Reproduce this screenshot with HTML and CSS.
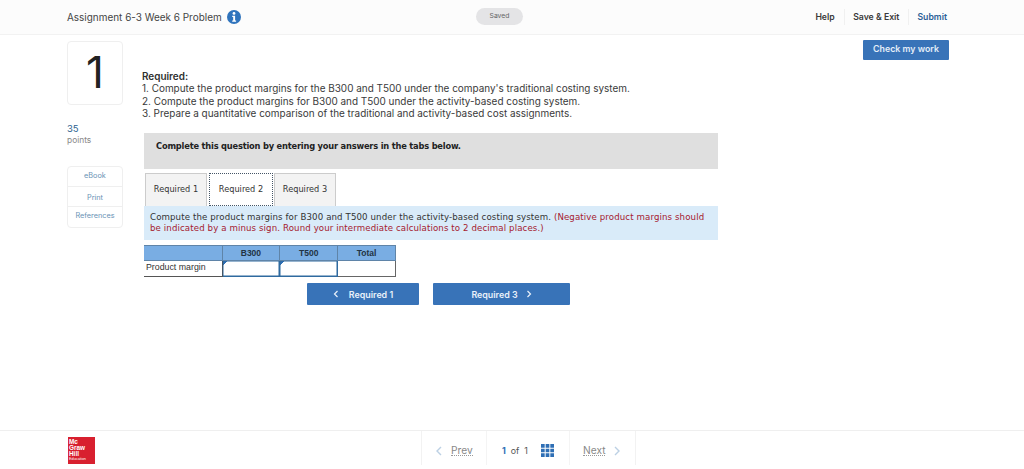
FILE: index.html
```html
<!DOCTYPE html>
<html lang="en">
<head>
<meta charset="utf-8">
<title>Assignment 6-3 Week 6 Problem</title>
<link rel="stylesheet" href="styles.css">
</head>
<body>
<div class="page">
  <header class="topbar">
    <div class="title-wrap">
      <span class="title">Assignment 6-3 Week 6 Problem</span>
      <svg class="info" viewBox="0 0 14 14" width="14" height="14"><circle cx="7" cy="7" r="7" fill="#2f74bd"/><circle cx="7" cy="3.4" r="1.4" fill="#fff"/><path d="M5.2 5.7h2.9v4.7h1v1.4H5.2v-1.4h1V7.1h-1z" fill="#fff"/></svg>
    </div>
    <div class="saved">Saved</div>
    <nav class="top-actions">
      <span class="act">Help</span>
      <span class="act">Save &amp; Exit</span>
      <span class="act submit">Submit</span>
    </nav>
  </header>

  <main class="main">
    <aside class="side">
      <div class="qnum">1</div>
      <div class="pts">35</div>
      <div class="pts-label">points</div>
      <div class="links">
        <div class="link">eBook</div>
        <div class="link print">Print</div>
        <div class="link">References</div>
      </div>
    </aside>

    <section class="content">
      <div class="req">
        <div class="req-head">Required:</div>
        <div>1. Compute the product margins for the B300 and T500 under the company's traditional costing system.</div>
        <div>2. Compute the product margins for B300 and T500 under the activity-based costing system.</div>
        <div>3. Prepare a quantitative comparison of the traditional and activity-based cost assignments.</div>
      </div>
      <div class="complete">Complete this question by entering your answers in the tabs below.</div>
      <div class="tabs">
        <div class="tab">Required 1</div>
        <div class="tab active">Required 2</div>
        <div class="tab">Required 3</div>
      </div>
      <div class="prompt">Compute the product margins for B300 and T500 under the activity-based costing system. <span class="red">(Negative product margins should be indicated by a minus sign. Round your intermediate calculations to 2 decimal places.)</span></div>
      <table class="grid">
        <tr><th class="c0"></th><th>B300</th><th>T500</th><th>Total</th></tr>
        <tr><td class="c0">Product margin</td><td class="input"></td><td class="input"></td><td class="plain"></td></tr>
      </table>
      <div class="nav-btns">
        <div class="btn b1"><svg class="chev" viewBox="0 0 6 8" width="6" height="8"><path d="M4.5 1 1.5 4l3 3" fill="none" stroke="#e9f1fa" stroke-width="1.2"/></svg>Required 1</div>
        <div class="btn b2">Required 3<svg class="chev r" viewBox="0 0 6 8" width="6" height="8"><path d="M1.5 1l3 3-3 3" fill="none" stroke="#e9f1fa" stroke-width="1.2"/></svg></div>
      </div>
    </section>

    <div class="check-col"><div class="check">Check my work</div></div>
  </main>

  <footer class="foot">
    <div class="logo">Mc<br>Graw<br>Hill<span class="edu">Education</span></div>
    <div class="pager">
      <div class="pg prev"><svg class="arrow" viewBox="0 0 7 10" width="7" height="10"><path d="M6 1 2 5l4 4" fill="none" stroke="#bcd0e4" stroke-width="1.4"/></svg><span class="dotted">Prev</span></div>
      <div class="pg mid"><span class="cur">1</span><span class="of">of</span><span>1</span>
        <svg class="gridicon" viewBox="0 0 12 12" width="13" height="13"><path fill="#2f6fb5" d="M0 0h3.4v3.4H0zM4.3 0h3.4v3.4H4.3zM8.6 0H12v3.4H8.6zM0 4.3h3.4v3.4H0zM4.3 4.3h3.4v3.4H4.3zM8.6 4.3H12v3.4H8.6zM0 8.6h3.4V12H0zM4.3 8.6h3.4V12H4.3zM8.6 8.6H12V12H8.6z"/></svg>
      </div>
      <div class="pg next"><span class="dotted">Next</span><svg class="arrow r" viewBox="0 0 7 10" width="7" height="10"><path d="M1 1l4 4-4 4" fill="none" stroke="#bcd0e4" stroke-width="1.4"/></svg></div>
    </div>
  </footer>
</div>
</body>
</html>
```

FILE: styles.css
```css
* { box-sizing: border-box; }
html, body { margin: 0; padding: 0; background: #fff; }
body { font-family: "Inter", "Liberation Sans", sans-serif; color: #333; }
.page { height: 469px; display: flex; flex-direction: column; overflow: hidden; }

.topbar { height: 35px; flex: none; display: grid; grid-template-columns: 409px 47px 1fr; align-items: center; padding: 0 75px 1px 67px; background: #fcfcfc; border-bottom: 1px solid #f2f2f2; }
.title-wrap { display: flex; align-items: center; gap: 5px; }
.title { font-size: 9.95px; color: #444; }
.info { display: block; }
.saved { width: 47px; height: 17px; margin-bottom: 1px; border-radius: 9px; background: #e4e4e6; font-size: 6.8px; line-height: 15px; text-align: center; color: #666; }
.top-actions { display: flex; justify-content: flex-end; align-items: center; font-size: 8.7px; font-weight: 600; color: #3a3a3a; }
.act { padding: 3px 8.5px; border-right: 1px solid #f0f0f0; }
.act:first-child { padding-right: 9px; }
.act:last-child { border-right: 0; padding-right: 2px; }
.submit { color: #2c5f97; }

.main { flex: 1; display: flex; min-height: 0; padding-left: 67px; }
.side { width: 56px; flex: none; padding-top: 6px; }
.qnum { height: 64px; border: 1px solid #efefef; border-radius: 4px; font-size: 44px; font-weight: 400; line-height: 60px; text-align: center; color: #222; }
.pts { margin-top: 17px; font-size: 9.5px; line-height: 13px; color: #2d5f8f; }
.pts-label { font-size: 8.4px; line-height: 11px; color: #888; }
.links { margin-top: 20px; border: 1px solid #efefef; border-radius: 4px; font-size: 7.3px; text-align: center; color: #6a93b5; }
.link { height: 20px; line-height: 18px; border-bottom: 1px solid #efefef; }
.link.print { line-height: 21px; }
.link:last-child { border-bottom: 0; }

.content { width: 576px; margin-left: 19px; flex: none; padding-top: 35px; }
.req { font-size: 9.95px; line-height: 12.3px; color: #3a3a3a; }
.req-head { font-weight: 600; color: #2f2f2f; }
.complete { width: 574px; height: 36px; margin: 14px 0 0 2px; padding: 8px 12px; background: #dfdfdf; font: 700 8.3px/11px "DejaVu Sans", sans-serif; letter-spacing: -.2px; color: #222; }
.tabs { display: flex; margin: 4px 0 0 3px; height: 33px; }
.tab { width: 62px; border: 1px solid #ccc; border-bottom: 0; background: #f3f3f3; font: 8.2px/31px "DejaVu Sans", sans-serif; text-align: center; color: #333; margin-right: 2px; }
.tab:last-child { margin-right: 0; }
.tab.active { width: 64px; margin-right: 1px; background: #fff; border: 1px dotted #456; }
.prompt { width: 574px; height: 34px; margin-left: 2px; padding: 6px 6px; background: #d9ebf9; font: 8.65px/11px "DejaVu Sans", sans-serif; letter-spacing: .105px; color: #333; }
.red { color: #a5202f; }
.grid { margin: 5px 0 0 2px; border-collapse: collapse; table-layout: fixed; width: 252px; font: 8.5px "Liberation Sans", sans-serif; }
.grid th { height: 15px; padding: 0 0 1px; background: #79ade3; border: 1px solid #5f84a8; border-width: 1px 1px 1px 0; font-weight: 700; color: #234; }
.grid th.c0 { width: 78px; border-left: 0; }
.grid td { height: 16px; padding: 0; }
.grid td.c0 { padding: 0 0 3px 2px; border-bottom: 1px solid #555; border-right: 1px solid #456; color: #333; font-size: 8.8px; }
.grid td.input { border: 1px solid #2f6a9f; box-shadow: inset 0 0 0 .5px #2f6a9f; background: linear-gradient(135deg, #2f6fb5 0 3px, transparent 3px) no-repeat 0 0 / 6px 6px; }
.grid td.plain { border: 1px solid #666; border-left: 0; }
.nav-btns { display: flex; margin: 6px 0 0 165px; gap: 14px; }
.btn { height: 22px; border-radius: 1px; background: #3873b8; color: #e9f1fa; font: 600 8.9px/21px "Inter", sans-serif; text-align: center; display: flex; align-items: center; justify-content: center; }
.b1 { width: 112px; }
.b2 { width: 137px; }
.chev { margin-right: 10px; display: block; }
.chev.r { margin: 0 0 0 8px; }

.check-col { flex: 1; display: flex; justify-content: flex-end; padding: 5px 75px 0 0; }
.check { width: 86px; height: 20px; border-radius: 1px; background: #3873b8; color: #e4eef9; font-size: 8.8px; font-weight: 600; line-height: 17px; text-align: center; }

.foot { height: 39px; flex: none; border-top: 1px solid #efefef; display: grid; grid-template-columns: 421px auto 1fr; }
.logo { width: 27px; height: 27px; margin: 6px 0 0 68px; padding: 2px 0 0 1px; background: #d8202f; color: #fff; font: 700 6.4px/6px "Liberation Sans", sans-serif; overflow: hidden; }
.edu { display: block; font-size: 3.8px; line-height: 4px; font-weight: 400; }
.pager { display: flex; height: 34px; border-left: 1px solid #f2f2f2; border-right: 1px solid #f2f2f2; font-size: 8.8px; color: #555; }
.pg { display: flex; align-items: center; height: 34px; padding-top: 5px; }
.prev { width: 65px; padding-left: 13px; border-right: 1px solid #f4f4f4; color: #888; }
.mid { width: 83px; padding-left: 15px; border-right: 1px solid #f4f4f4; }
.next { width: 65px; padding-left: 13px; color: #888; }
.arrow { margin-right: 9px; display: block; }
.arrow.r { margin: 0 0 0 9px; }
.dotted { border-bottom: 1px dotted #999; font-size: 10.2px; line-height: 10px; }
.cur { color: #2f6fb5; font-weight: 700; }
.of { margin: 0 5px; }
.gridicon { margin-left: 13px; }
```
